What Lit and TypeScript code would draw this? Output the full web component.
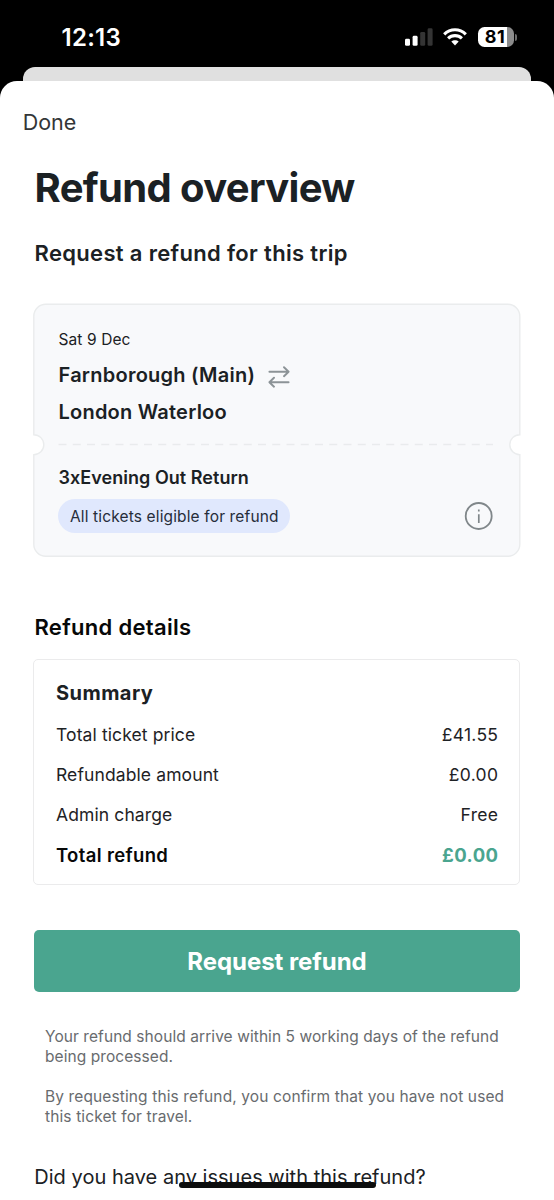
import { LitElement, html, svg, css } from "lit";
import { customElement } from "lit/decorators.js";

@customElement("status-bar")
class StatusBar extends LitElement {
  static styles = css`
    :host { display: flex; align-items: center; justify-content: space-between; height: 67px; box-sizing: border-box; padding: 8px 37.5px 0 61.5px; background: #000; }
    .time { color: #fff; font-size: 24px; font-weight: 600; line-height: 30px; letter-spacing: 0.27px; }
    .icons { display: flex; align-items: center; gap: 10.5px; margin-top: -1px; }
    svg { display: block; }
    .battery { display: flex; align-items: center; gap: 1px; }
    .cell { box-sizing: border-box; width: 36px; height: 20px; padding-right: 1px; border-radius: 6.5px; background: linear-gradient(90deg, #fff 29.5px, #8b8b8b 29.5px); color: #000; font-size: 18px; font-weight: 700; line-height: 20px; text-align: center; letter-spacing: 0.5px; }
    .nub { width: 2px; height: 7px; border-radius: 0 2px 2px 0; background: #6b6b6b; }
  `;
  render() {
    return html`
      <div class="time">12:13</div>
      <div class="icons">
        <svg width="28" height="18" viewBox="0 0 28 18">
          <rect x="0" y="10.8" width="5" height="7" rx="1.4" fill="#fff" />
          <rect x="7.6" y="7.8" width="5" height="10" rx="1.4" fill="#fff" />
          <rect x="15.2" y="3.9" width="5" height="13.9" rx="1.4" fill="#343434" />
          <rect x="22.6" y="0.3" width="5" height="17.5" rx="1.4" fill="#343434" />
        </svg>
        <svg width="24" height="18" viewBox="0 0 24 18" fill="none" stroke="#fff">
          <path d="M1.2 6.3C7.3 0.2 16.7 0.2 22.8 6.3" stroke-width="3.1" />
          <path d="M5.1 10.4C9 6.7 15 6.7 18.9 10.4" stroke-width="3.1" />
          <path d="M8.3 13.6C10.4 11.7 13.6 11.7 15.7 13.6L12 17.4Z" fill="#fff" stroke="none" />
        </svg>
        <div class="battery"><div class="cell">81</div><div class="nub"></div></div>
      </div>
    `;
  }
}

@customElement("trip-ticket")
class TripTicket extends LitElement {
  static styles = css`
    :host { display: block; position: relative; height: 254px; color: #1b2124; }
    .shape { position: absolute; left: 0; top: 0; }
    .content { position: relative; padding: 26px 27px 0 25.5px; }
    .date { font-size: 15.5px; line-height: 22px; letter-spacing: 0.1px; }
    .route { display: flex; align-items: center; gap: 13px; margin-top: 8.5px; }
    .station { font-size: 20px; font-weight: 600; line-height: 30px; letter-spacing: 0.25px; }
    .second { margin-top: 7px; letter-spacing: 0.23px; }
    .arrows { display: block; margin-top: 4px; }
    .fare { margin-top: 39.5px; font-size: 18px; font-weight: 600; line-height: 24px; letter-spacing: 0.04px; }
    .status { display: flex; align-items: center; justify-content: space-between; margin-top: 8.5px; }
    .pill { box-sizing: border-box; width: 232px; height: 34px; margin-left: -0.5px; border-radius: 17px; padding: 1px 0 0 12px; background: #e0e8fd; color: #262d3a; font-size: 15.5px; line-height: 34px; letter-spacing: 0.14px; white-space: nowrap; }
    .info { display: block; }
  `;
  render() {
    return html`
      <svg class="shape" width="488" height="254" viewBox="0 0 488 254">
        <path d="M12.8 1.3H474.8A12 12 0 0 1 486.8 13.3V131.7A10 10 0 0 0 486.8 151.7V241.3A12 12 0 0 1 474.8 253.3H12.8A12 12 0 0 1 0.8 241.3V151.7A10 10 0 0 0 0.8 131.7V13.3A12 12 0 0 1 12.8 1.3Z"
          fill="#f8f9fb" stroke="#eaeced" stroke-width="1.4" />
        <path d="M25.5 141.4H460" stroke="#e9ebed" stroke-width="1.5" stroke-dasharray="8 6.25" />
      </svg>
      <div class="content">
        <div class="date">Sat 9 Dec</div>
        <div class="route">
          <div class="station">Farnborough (Main)</div>
          <svg class="arrows" width="22" height="22" viewBox="0 0 22 22" fill="none" stroke="#8c9397" stroke-width="1.9" stroke-linecap="round" stroke-linejoin="round">
            <path d="M1.4 5.7H20.4M16 1.2L20.6 5.7L16 10.2" />
            <path d="M20.6 16.2H1.6M6 11.7L1.4 16.2L6 20.7" />
          </svg>
        </div>
        <div class="station second">London Waterloo</div>
        <div class="fare">3xEvening Out Return</div>
        <div class="status">
          <div class="pill">All tickets eligible for refund</div>
          <svg class="info" width="30" height="30" viewBox="0 0 30 30" fill="none" stroke="#80878a">
            <circle cx="14.7" cy="15" r="13" stroke-width="1.8" />
            <path d="M14.8 13.2V22M14.8 8.6V10.4" stroke-width="1.7" />
          </svg>
        </div>
      </div>
    `;
  }
}

@customElement("refund-summary")
class RefundSummary extends LitElement {
  static styles = css`
    :host { display: block; box-sizing: border-box; height: 226px; border: 1.5px solid #ebebec; border-radius: 5px; padding: 18px 21px 0 22px; color: #1e2225; }
    .title { color: #1b2124; font-size: 20px; font-weight: 700; line-height: 30px; letter-spacing: 0.45px; }
    .row { display: flex; justify-content: space-between; height: 40px; line-height: 40px; font-size: 17.5px; letter-spacing: 0.11px; }
    .first { margin-top: 6.5px; }
    .money { letter-spacing: 0.3px; margin-right: -0.3px; }
    .total { height: 38px; color: #070808; font-size: 18.5px; font-weight: 600; letter-spacing: 0.35px; }
    .refund { color: #4aa58f; font-weight: 700; letter-spacing: 0.4px; margin-right: -0.4px; }
  `;
  rows = [["Total ticket price", "£41.55"], ["Refundable amount", "£0.00"], ["Admin charge", "Free"]];
  render() {
    return html`
      <div class="title">Summary</div>
      ${this.rows.map(([name, value], i) => html`
        <div class="row ${i === 0 ? "first" : ""}"><span>${name}</span><span class="money">${value}</span></div>
      `)}
      <div class="row total"><span>Total refund</span><span class="refund">£0.00</span></div>
    `;
  }
}

@customElement("app-root")
class AppRoot extends LitElement {
  static styles = css`
    :host { display: block; position: relative; height: 1200px; overflow: hidden; background: #000; font-family: Inter, "Liberation Sans", sans-serif; color: #1b2124; white-space: nowrap; }
    .behind { height: 34px; margin: 0 23px; border-radius: 12px 12px 0 0; background: #e0e0e0; }
    .sheet { position: relative; box-sizing: border-box; height: 1119px; margin-top: -20px; padding: 27px 34px 0 33px; border-radius: 17px 17px 0 0; background: #fff; }
    .done { margin-left: -10.3px; font-size: 21.5px; line-height: 29px; color: #333638; }
    h1 { margin: 26px 0 0 1.5px; font-size: 40px; font-weight: 700; line-height: 50px; letter-spacing: -0.65px; }
    h2 { margin: 24.5px 0 0 1.5px; font-size: 22px; font-weight: 600; line-height: 30px; letter-spacing: 0.33px; }
    .details { margin-top: 54.5px; color: #070808; letter-spacing: 0.3px; }
    trip-ticket { margin: 35.5px -1px 0 0; }
    refund-summary { margin-top: 17.5px; }
    .request { display: flex; align-items: center; justify-content: center; box-sizing: border-box; height: 62px; margin: 45px 0 0 1px; padding-top: 1px; border-radius: 5px; background: #4aa58f; color: #fff; font-size: 24px; font-weight: 700; letter-spacing: -0.05px; }
    .note { margin: 20.2px 0 0 12px; font-size: 15.5px; line-height: 20.2px; color: #686b6e; letter-spacing: 0.07px; }
    .n1 { margin-top: 34.5px; }
    .n2 { letter-spacing: 0.12px; }
    .issues { margin: 34.8px 0 0 1.3px; font-size: 20px; line-height: 30px; letter-spacing: 0.02px; }
    .home { position: absolute; left: 178.5px; bottom: 12px; width: 197.5px; height: 6.5px; border-radius: 4px; background: #0c0d0d; }
  `;
  render() {
    return html`
      <status-bar></status-bar>
      <div class="behind"></div>
      <div class="sheet">
        <div class="done">Done</div>
        <h1>Refund overview</h1>
        <h2>Request a refund for this trip</h2>
        <trip-ticket></trip-ticket>
        <h2 class="details">Refund details</h2>
        <refund-summary></refund-summary>
        <div class="request">Request refund</div>
        <div class="note n1">Your refund should arrive within 5 working days of the refund<br />being processed.</div>
        <div class="note n2">By requesting this refund, you confirm that you have not used<br />this ticket for travel.</div>
        <div class="issues">Did you have any issues with this refund?</div>
      </div>
      <div class="home"></div>
    `;
  }
}
